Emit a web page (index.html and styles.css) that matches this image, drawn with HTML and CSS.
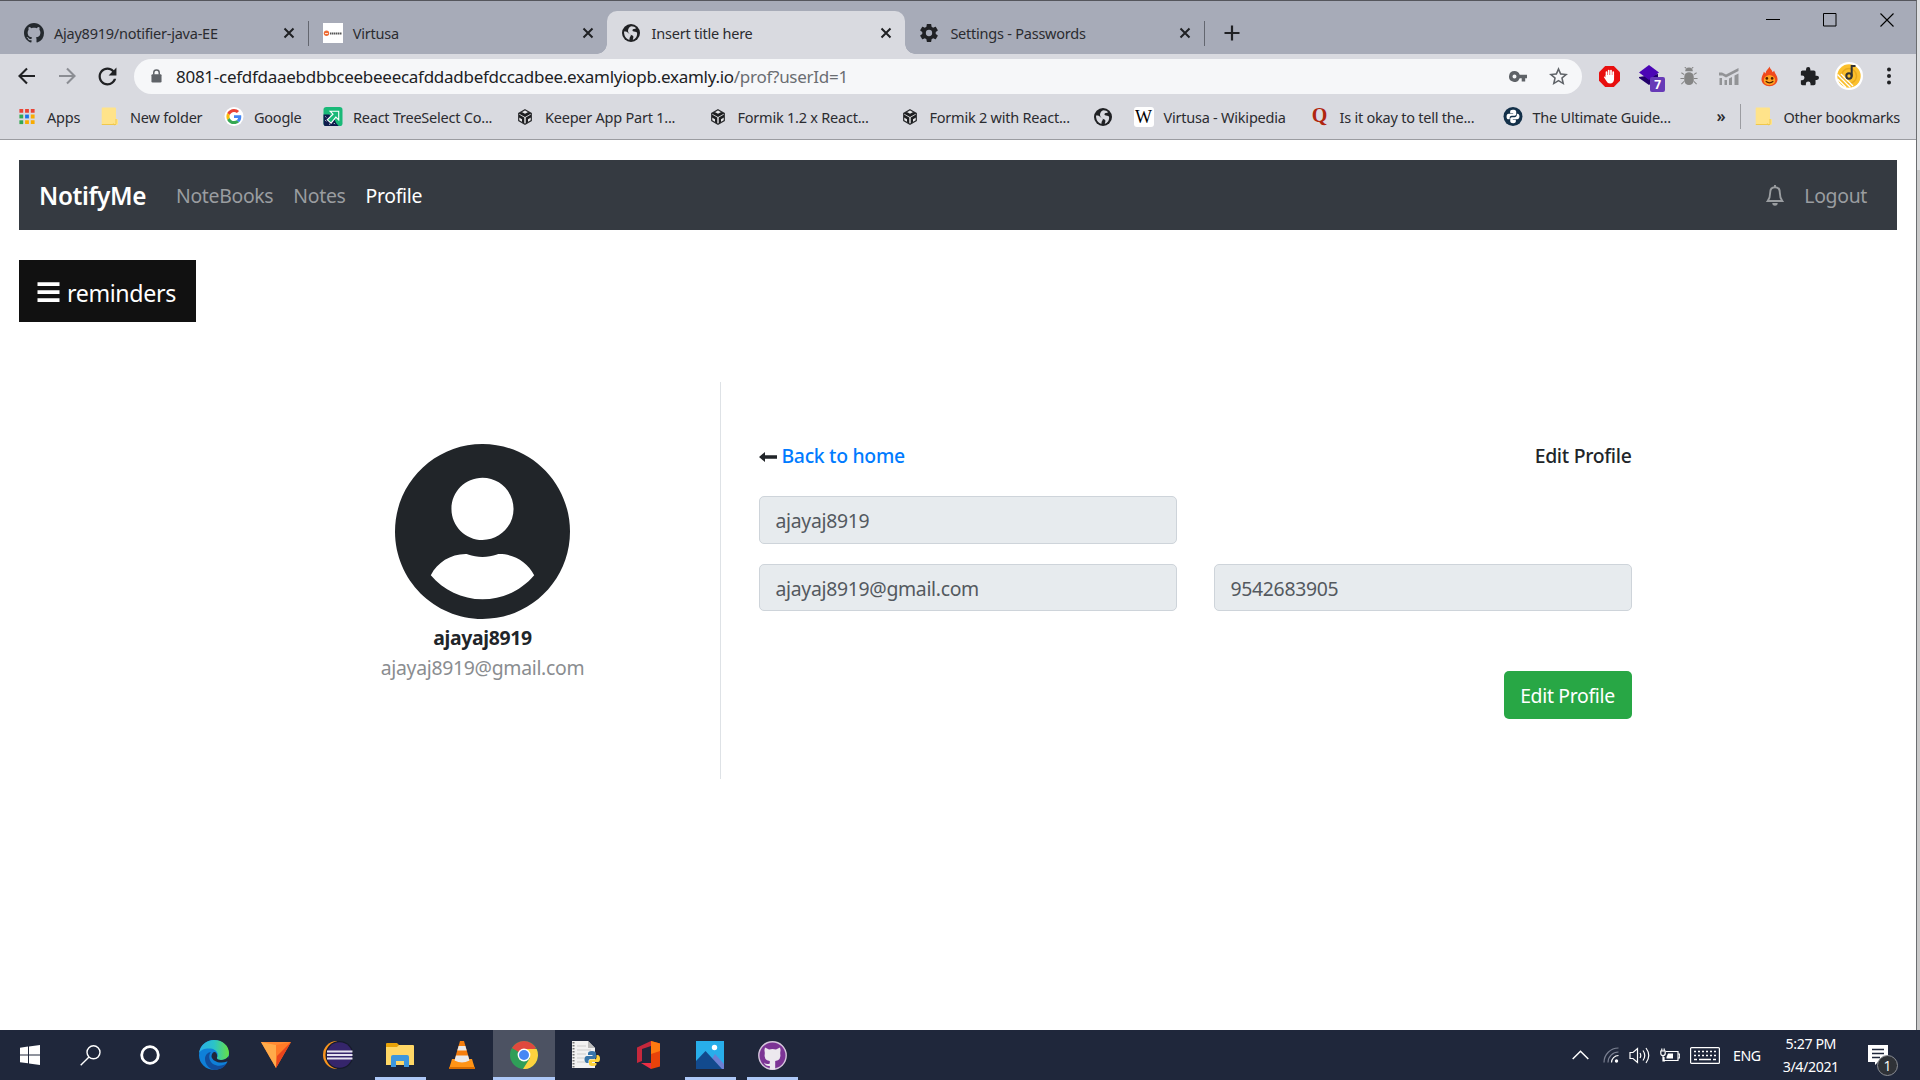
FILE: index.html
```html
<!DOCTYPE html>
<html lang="en">
<head>
<meta charset="utf-8">
<title>Insert title here</title>
<link rel="stylesheet" href="styles.css">
</head>
<body>
<svg class="defs" width="0" height="0">
  <defs>
    <symbol id="octocat" viewBox="0 0 16 16"><path d="M8 0C3.58 0 0 3.58 0 8c0 3.54 2.29 6.53 5.47 7.59.4.07.55-.17.55-.38 0-.19-.01-.82-.01-1.49-2.01.37-2.53-.49-2.69-.94-.09-.23-.48-.94-.82-1.13-.28-.15-.68-.52-.01-.53.63-.01 1.08.58 1.23.82.72 1.21 1.87.87 2.33.66.07-.52.28-.87.51-1.07-1.78-.2-3.64-.89-3.64-3.95 0-.87.31-1.59.82-2.15-.08-.2-.36-1.02.08-2.12 0 0 .67-.21 2.2.82.64-.18 1.32-.27 2-.27s1.36.09 2 .27c1.53-1.04 2.2-.82 2.2-.82.44 1.1.16 1.92.08 2.12.51.56.82 1.27.82 2.15 0 3.07-1.87 3.75-3.65 3.95.29.25.54.73.54 1.48 0 1.07-.01 1.93-.01 2.2 0 .21.15.46.55.38A8.01 8.01 0 0 0 16 8c0-4.42-3.58-8-8-8z"/></symbol>
    <symbol id="globe" viewBox="0 0 18 18"><circle cx="9" cy="9" r="9" fill="#202124"/><path d="M2 7.500c2-.3 3.600.3 4.300 1.600.5 1.100 2.300.6 2.500 2 .2 1.500-1.300 1.600-1.300 4.700C4 15 2 12 2 7.500zM9.500 2.200c2 0 3.700.8 4.700 2-.6.500-1.800.5-2.700.9-1.200.5-1.300 1.700-.5 2.200 1 .6 3.300.2 3.900 1.300.5 1 .2 3.400-.9 4.900-.9 1.200-2 2-3.200 2.300.3-1.500 1-2.700.3-3.700-.7-.9-1.900-.8-2.900-1.800-1-1-2.200-1.700-2.200-3.600C6 4.500 7.500 2.500 9.500 2.200z" fill="#d9dae0"/></symbol>
    <symbol id="close" viewBox="0 0 12 12"><path d="M1.500 1.500l9 9M10.500 1.500l-9 9" stroke="#202124" stroke-width="2" fill="none"/></symbol>
    <symbol id="folder" viewBox="0 0 17 19"><path d="M1 .5h12.500a1 1 0 0 1 1 1V12h1a1 1 0 0 1 1 1v3.500a1.500 1.500 0 0 1-1.500 1.500H1a.8.8 0 0 1-.8-.8V1.300A.8.800 0 0 1 1 .5z" fill="#ffe38a"/><path d="M.3 17.500h14.200M14.500 12v4.500a1.300 1.300 0 0 1-2.600 0" stroke="#f0c84c" fill="none"/></symbol>
    <symbol id="sandbox" viewBox="0 0 16 16"><path d="M8 .8l6.300 3.600v7.200L8 15.200l-6.300-3.600V4.400z" fill="#e8e8ea" stroke="#2a2b2e" stroke-width="1.200"/><path d="M1.700 4.600L4.800 3 8 4.700 11.200 3l3.100 1.600L8 8zM7.300 8.500v6.200L5 13.300v-3L2 8.500V5.600zM8.700 8.500v6.200l2.300-1.400v-3l3-1.800V5.600z" fill="#1e1f22"/></symbol>
  </defs>
</svg>

<div class="screen">
  <div class="window">
    <header class="browser">
      <div class="tabstrip">
        <div class="tab">
          <svg class="fav" viewBox="0 0 16 16" fill="#24292e"><use href="#octocat"/></svg>
          <span>Ajay8919/notifier-java-EE</span>
          <svg class="x"><use href="#close"/></svg>
        </div>
        <div class="tab sep">
          <svg class="fav" viewBox="0 0 20 20"><path fill="#fff" d="M0 0h20v20H0z"/><circle cx="3.500" cy="10.300" r="2.700" fill="#ee6c35"/><path d="M2 10.500h3" stroke="#fff" stroke-width=".8"/><path d="M7 10.500h12" stroke="#555" stroke-width="1.800" stroke-dasharray="1.500 .5"/></svg>
          <span>Virtusa</span>
          <svg class="x"><use href="#close"/></svg>
        </div>
        <div class="tab active">
          <svg class="fav small"><use href="#globe"/></svg>
          <span>Insert title here</span>
          <svg class="x"><use href="#close"/></svg>
        </div>
        <div class="tab">
          <svg class="fav small" viewBox="2 2 20 20" fill="#202124"><path d="M19.430 12.980c.04-.32.07-.64.07-.98s-.03-.66-.07-.98l2.110-1.650c.19-.15.24-.42.12-.64l-2-3.460c-.12-.22-.39-.3-.61-.22l-2.490 1c-.52-.4-1.080-.73-1.690-.98l-.38-2.650C14.460 2.180 14.250 2 14 2h-4c-.25 0-.46.18-.49.42l-.38 2.650c-.61.25-1.170.59-1.690.98l-2.490-1c-.23-.09-.49 0-.61.22l-2 3.460c-.13.22-.07.49.12.64l2.110 1.650c-.04.32-.07.65-.07.98s.03.66.07.98l-2.110 1.650c-.19.15-.24.42-.12.64l2 3.460c.12.22.39.3.61.22l2.490-1c.52.4 1.080.73 1.690.98l.38 2.650c.03.24.24.42.49.42h4c.25 0 .46-.18.49-.42l.38-2.650c.61-.25 1.170-.59 1.690-.98l2.490 1c.23.09.49 0 .61-.22l2-3.460c.12-.22.07-.49-.12-.64l-2.110-1.650zM12 15.500a3.500 3.500 0 1 1 0-7 3.500 3.500 0 0 1 0 7z"/></svg>
          <span>Settings - Passwords</span>
          <svg class="x"><use href="#close"/></svg>
        </div>
        <div class="newtab sep"><svg width="16" height="16" viewBox="0 0 16 16"><path d="M8 .5v15M.5 8h15" stroke="#202124" stroke-width="2.200"/></svg></div>
        <div class="wincontrols">
          <svg width="14" height="14"><path d="M0 6.500h14" stroke="#000"/></svg>
          <svg width="14" height="14"><path d="M.5.500h12.500v12.500H.5z" fill="none" stroke="#000"/></svg>
          <svg width="14" height="14"><path d="M.5.500l13 13M13.500.500l-13 13" stroke="#000" stroke-width="1.100"/></svg>
        </div>
      </div>

      <div class="toolbar">
        <div class="navbtns">
          <svg width="18" height="18" viewBox="0 0 18 18" fill="none" stroke="#202124" stroke-width="2.100"><path d="M17 9H2M9 1.500L1.500 9 9 16.500"/></svg>
          <svg width="18" height="18" viewBox="0 0 18 18" fill="none" stroke="#8b8d93" stroke-width="2.100"><path d="M1 9h15M9 1.500L16.500 9 9 16.500"/></svg>
          <svg width="19" height="19" viewBox="3.500 3.500 17 17" fill="#202124"><path d="M17.650 6.350C16.200 4.900 14.210 4 12 4c-4.420 0-7.990 3.580-7.990 8s3.570 8 7.990 8c3.730 0 6.840-2.550 7.730-6h-2.080c-.82 2.330-3.040 4-5.650 4-3.310 0-6-2.690-6-6s2.690-6 6-6c1.660 0 3.140.69 4.220 1.780L13 11h7V4l-2.350 2.350z"/></svg>
        </div>
        <div class="omnibox">
          <svg width="11" height="14" viewBox="0 0 12 15"><path d="M3 6V4a3 3 0 0 1 6 0v2" fill="none" stroke="#5f6368" stroke-width="1.600"/><rect x=".5" y="5.500" width="11" height="9" rx="1.300" fill="#5f6368"/></svg>
          <p class="url">8081-cefdfdaaebdbbceebeeecafddadbefdccadbee.examlyiopb.examly.io<span>/prof?userId=1</span></p>
          <svg class="key" width="18" height="11" viewBox="0 0 18 11"><path d="M5.500 0a5.500 5.500 0 1 0 5.200 7.300h2v3.200h3.500V7.300H18V3.700h-7.300A5.500 5.500 0 0 0 5.500 0zm0 3.500a2 2 0 1 1 0 4 2 2 0 0 1 0-4z" fill="#5f6368"/></svg>
          <svg width="19" height="19" viewBox="2 2 20 20"><path d="M22 9.240l-7.190-.62L12 2 9.190 8.630 2 9.240l5.460 4.730L5.820 21 12 17.270 18.180 21l-1.630-7.030L22 9.240zM12 15.400l-3.760 2.270 1-4.280-3.320-2.880 4.380-.38L12 6.100l1.710 4.040 4.380.38-3.320 2.880 1 4.280L12 15.400z" fill="#5f6368"/></svg>
        </div>
        <div class="extensions">
          <span><svg width="21" height="21" viewBox="0 0 21 21"><path d="M6.200 0h8.600L21 6.200v8.600L14.800 21H6.200L0 14.800V6.200z" fill="#e80f0f"/><path d="M7.500 11V6.200M9.700 10V4.500M12 10V4.500M14.200 10.500V6" stroke="#fff" stroke-width="1.700" stroke-linecap="round"/><path d="M6.650 9h8.400v4.500q-.5 4-4 4-2.500 0-3.700-2.500L4.800 11q.4-1.200 1.850.5z" fill="#fff"/></svg></span>
          <span class="badged"><svg width="22" height="22" viewBox="0 0 22 22"><path d="M1 13l10 7 9-7V9L1 12z" fill="#22006b"/><path d="M11 0l10 7.500L11 15 1 7.500z" fill="#4b05b5"/></svg><b>7</b></span>
          <span><svg width="18" height="19" viewBox="0 0 18 20" fill="#858585"><path d="M5 4.500a4 4 0 0 1 8 0z"/><rect x="4" y="5.500" width="10" height="13.500" rx="5"/><path d="M4 8L1 6M4 12H0M4 15l-3 3M14 8l3-2M14 12h4M14 15l3 3M6 1.500L4.500 0M12 1.500L13.500 0" stroke="#858585" stroke-width="1.100"/></svg></span>
          <span><svg width="20" height="17" viewBox="0 0 20 17" fill="#929396"><path d="M0 4.500h3L7 6.500 19.500 0v3L7 9.500 3.500 7.500H0zM.5 10H3v7H.5zM5.500 12H8v5H5.500zM10 10.500L13 9v8h-3zM15.500 7.500L19.500 5.500V17h-4z"/></svg></span>
          <span><svg width="17" height="21" viewBox="0 0 18 21"><path d="M9 0c.5 3 3 3.500 3.200 6L14 4.500c.5 3 3.500 5 3.500 9 0 4.500-3.800 7.300-8.500 7.300S.5 18 .5 13.500c0-3.500 2-5 2.500-8L5 7.200C5 4 8 3 9 0z" fill="#f0491b"/><path d="M9 9c3 .5 6 2 6 5.500s-2.500 5-6 5-6-1.500-6-5S6 9.500 9 9z" fill="#ffa21f"/><circle cx="6.200" cy="12.500" r="1.400" fill="#522000"/><circle cx="11.800" cy="12.500" r="1.400" fill="#522000"/><path d="M5 15.500q4 3.500 8 0" fill="none" stroke="#522000" stroke-width="1.300"/></svg></span>
          <span><svg width="19" height="19" viewBox="1 1 22 22"><path d="M20.500 11H19V7c0-1.100-.9-2-2-2h-4V3.500a2.500 2.500 0 0 0-5 0V5H4c-1.100 0-1.990.9-1.990 2v3.800H3.500a2.700 2.700 0 0 1 0 5.400H2V20c0 1.100.9 2 2 2h3.800v-1.500a2.700 2.700 0 0 1 5.400 0V22H17c1.100 0 2-.9 2-2v-4h1.500a2.500 2.500 0 0 0 0-5z" fill="#202124"/></svg></span>
          <span><svg width="28" height="28" viewBox="0 0 28 28"><circle cx="14" cy="14" r="14" fill="#fff"/><circle cx="14" cy="14" r="11.700" fill="#fbc02d"/><circle cx="14" cy="14" r="7.500" fill="none" stroke="#e9a91d" stroke-width="1.500"/><path d="M2.500 12.500l13 13M2.500 17l8.500 8.500M6 12l12 12" stroke="#fff" stroke-width="1.400"/><circle cx="14" cy="14" r="2.700" fill="none" stroke="#333" stroke-width="2"/><path d="M16.700 14.500V4H20.500" stroke="#333" stroke-width="2" fill="none"/></svg></span>
          <span><svg width="4" height="18" viewBox="0 0 4 18" fill="#202124"><circle cx="2" cy="2.500" r="2"/><circle cx="2" cy="9" r="2"/><circle cx="2" cy="15.500" r="2"/></svg></span>
        </div>
      </div>

      <nav class="bookmarks">
        <a><svg viewBox="0 0 20 20"><path d="M2 2h4v4H2zM8 2h4v4H8zM14 2h4v4h-4z" fill="#ea4335"/><path d="M2 8h4v4H2z" fill="#34a853"/><path d="M8 8h4v4H8z" fill="#1a73e8"/><path d="M14 8h4v4h-4zM8 14h4v4H8zM14 14h4v4h-4z" fill="#f9ab00"/><path d="M2 14h4v4H2z" fill="#34a853"/></svg>Apps</a>
        <a><svg><use href="#folder"/></svg>New folder</a>
        <a><svg viewBox="-6 -6 60 60"><circle cx="24" cy="24" r="30" fill="#fff"/><path fill="#EA4335" d="M24 9.500c3.540 0 6.710 1.220 9.210 3.600l6.850-6.850C35.900 2.380 30.470 0 24 0 14.620 0 6.510 5.380 2.560 13.220l7.980 6.190C12.430 13.720 17.740 9.500 24 9.500z"/><path fill="#4285F4" d="M46.980 24.550c0-1.570-.15-3.090-.38-4.550H24v9.020h12.940c-.58 2.960-2.260 5.480-4.780 7.180l7.730 6c4.510-4.180 7.090-10.360 7.090-17.650z"/><path fill="#FBBC05" d="M10.530 28.590c-.48-1.450-.76-2.990-.76-4.590s.27-3.140.76-4.590l-7.980-6.190C.92 16.460 0 20.120 0 24c0 3.880.92 7.540 2.560 10.780l7.970-6.190z"/><path fill="#34A853" d="M24 48c6.480 0 11.930-2.130 15.890-5.810l-7.730-6c-2.150 1.450-4.920 2.300-8.160 2.300-6.260 0-11.570-4.220-13.470-9.910l-7.980 6.190C6.510 42.620 14.620 48 24 48z"/></svg>Google</a>
        <a><svg viewBox="0 0 20 20"><rect width="20" height="20" rx="3" fill="#19b978"/><path d="M0 8v9a3 3 0 0 0 3 3h13a10 10 0 0 1-4-6L6 8z" fill="#0d1b4c"/><path d="M7 4.500h9v9l-3-2.800L8 17l-4-3.500L10 7.500z" fill="#19b978" stroke="#fff" stroke-width="1.200"/><path d="M2 10l1 1M2 14l1 1M6 18l1 .5M11 17l1 1" stroke="#fff"/></svg>React TreeSelect Co...</a>
        <a><svg class="s16"><use href="#sandbox"/></svg>Keeper App Part 1...</a>
        <a><svg class="s16"><use href="#sandbox"/></svg>Formik 1.2 x React...</a>
        <a><svg class="s16"><use href="#sandbox"/></svg>Formik 2 with React...</a>
        <a><svg class="s18"><use href="#globe"/></svg></a>
        <a><i class="wiki">W</i>Virtusa - Wikipedia</a>
        <a><i class="quora">Q</i>Is it okay to tell the...</a>
        <a><svg viewBox="0 0 20 20"><circle cx="10" cy="10" r="10" fill="#133049"/><path d="M9.800 3C7.500 3 7 4 7 5v1.500h3.200v.7H5.500C4 7.200 3.200 8.500 3.200 10.200S4 13 5.300 13h1.200v-1.700c0-1.300 1-2.200 2.200-2.200h3c1 0 1.700-.8 1.700-1.700V5c0-1.300-1.400-2-3.600-2z" fill="#fff"/><path d="M10.200 17c2.300 0 2.800-1 2.800-2v-1.500H9.800v-.7h4.700c1.500 0 2.300-1.300 2.300-3S16 7 14.700 7h-.7v1.500c0 1.300-1 2.200-2.200 2.200h-3c-1 0-1.700.8-1.700 1.700V15c0 1.300 1.100 2 3.100 2z" fill="#fff"/></svg>The Ultimate Guide...</a>
        <a class="more">»</a>
        <a class="other"><svg><use href="#folder"/></svg>Other bookmarks</a>
      </nav>
    </header>

    <main class="page">
      <nav class="navbar">
        <a class="brand">NotifyMe</a>
        <a>NoteBooks</a><a>Notes</a><a class="on">Profile</a>
        <span class="right">
          <svg width="18" height="21" viewBox="0 0 18 21"><path d="M9 2.200c-3.300 0-4.800 2.500-4.800 5.300 0 4.500-1 6.500-2.500 8.500h14.600c-1.500-2-2.500-4-2.500-8.500 0-2.800-1.500-5.300-4.800-5.300zM9 0v2.500" fill="none" stroke="#9a9da0" stroke-width="1.900"/><path d="M6.300 18h5.400a2.700 2.700 0 0 1-5.400 0z" fill="#9a9da0"/></svg>
          <a>Logout</a>
        </span>
      </nav>
      <button class="reminders"><svg width="23" height="21" viewBox="0 0 23 21"><path d="M.5 2.200h22M.5 10.200h22M.5 18.200h22" stroke="#fff" stroke-width="3.800"/></svg>reminders</button>

      <section class="card">
        <div class="who">
          <svg width="175" height="175" viewBox="0 0 496 496"><path fill="#212529" d="M248 0C111 0 0 111 0 248s111 248 248 248 248-111 248-248S385 0 248 0zm0 96c48.600 0 88 39.400 88 88s-39.400 88-88 88-88-39.400-88-88 39.400-88 88-88zm0 344c-58.700 0-111.300-26.600-146.500-68.200 18.800-35.400 55.600-59.800 98.500-59.800 2.400 0 4.800.4 7.100 1.100 13 4.200 26.600 6.900 40.900 6.900s28-2.700 40.900-6.900c2.300-.7 4.700-1.100 7.100-1.100 42.900 0 79.700 24.400 98.500 59.800C359.300 413.400 306.700 440 248 440z"/></svg>
          <b>ajayaj8919</b>
          <span>ajayaj8919@gmail.com</span>
        </div>
        <div class="form">
          <div class="formhead">
            <h6><svg width="18" height="10" viewBox="0 0 18 10"><path d="M6 0v3.300h12v3.400H6V10L0 5z" fill="#212529"/></svg><a>Back to home</a></h6>
            <h6>Edit Profile</h6>
          </div>
          <div class="fields">
            <div class="input">ajayaj8919</div><div></div>
            <div class="input">ajayaj8919@gmail.com</div>
            <div class="input">9542683905</div>
          </div>
          <button class="save">Edit Profile</button>
        </div>
      </section>
    </main>
  </div>
  <div class="behind"></div>

  <footer class="taskbar">
    <div class="sys">
      <span><svg width="20" height="20" viewBox="0 0 20 20" fill="#fff"><path d="M0 2.700L8 1.600v7.900H0zM9 1.400L20 0v9.500H9zM0 10.400h8v7.900L0 17.200zM9 10.400h11V20L9 18.500z"/></svg></span>
      <span><svg width="21" height="21" viewBox="0 0 21 21" fill="none" stroke="#fff" stroke-width="1.400"><circle cx="13.500" cy="7.300" r="6.500"/><path d="M9 12L.7 20.300"/></svg></span>
      <span><svg width="20" height="20" viewBox="0 0 20 20"><circle cx="10" cy="10" r="8.300" fill="none" stroke="#fff" stroke-width="2.800"/></svg></span>
    </div>
    <div class="apps">
      <span><svg width="30" height="30" viewBox="0 0 30 30"><defs><linearGradient id="e1"><stop offset="0" stop-color="#2aaee8"/><stop offset=".5" stop-color="#2bc3c9"/><stop offset="1" stop-color="#66e044"/></linearGradient></defs><circle cx="15" cy="15" r="15" fill="#0f80d8"/><path d="M0 13C1 5 8 0 15 0c9 0 15 6 15 13 0 5-4 7-8 7-3 0-4.500-1-4-2.500 2-3 0-8-6-9C7 8 2 9 0 13z" fill="url(#e1)"/><path d="M12 12c-3 3-2 9 2 12 5 3 10 2 14-1-3 5-8 7-13 7-5-1-9-6-9-11 0-4 3-7 6-7z" fill="#114d9c"/><path d="M18 17.500c-.5 1.500 1 2.500 4 2.500 3 0 6-1.200 7.500-4l1 6-2.500-.5c-7 3-15-.5-15.500-5 0-3 2-5 3.500-4.500 2 1 2.500 4 2 5.500z" fill="#20263a"/></svg></span>
      <span><svg width="30" height="26" viewBox="0 0 30 26"><path d="M0 0h30L15 26z" fill="#ff7b26"/><path d="M0 0h30L15 3z" fill="#ff8a33"/><path d="M0 0l15 3v23z" fill="#ffab4a"/><path d="M30 0L15 26l1-12z" fill="#e9441c"/></svg></span>
      <span><svg width="30" height="28" viewBox="0 0 30 28"><path d="M14 0a14 14 0 1 0 0 28z" fill="#f7941e"/><circle cx="16.500" cy="14" r="14" fill="#161b2c"/><circle cx="16.500" cy="14" r="12.800" fill="#35256b"/><path d="M4 10.500h25.500M4 14h25.500M4 17.500h25.500" stroke="#e6e4f0" stroke-width="2.200"/></svg></span>
      <span class="open"><svg width="28" height="24" viewBox="0 0 28 24"><path d="M0 1q0-1 1-1h10l3 3-2 4H0z" fill="#e8a208"/><path d="M0 4h11l2-2h14q1 0 1 1v19H0z" fill="#ffd766"/><path d="M5 24V14q0-2 2-2h14q2 0 2 2v10h-5v-6h-8v6z" fill="#3d97dd"/></svg></span>
      <span><svg width="26" height="28" viewBox="0 0 26 28"><path d="M3 18h20l3 10H0z" fill="#ff9416"/><path d="M0 26h26v2H0z" fill="#d96d00"/><path d="M11 0h4l5.500 19q-7.500 5-15 0z" fill="#f57d0b"/><path d="M9.600 5h6.800l1.300 4.500H8.300zM7 14.500h12l1.500 5q-7.500 4-15 0z" fill="#e9e9ea"/></svg></span>
      <span class="open current"><svg width="28" height="28" viewBox="0 0 28 28"><circle cx="14" cy="14" r="14" fill="#2f9e58"/><path d="M14 14L1.900 7A14 14 0 0 1 26.100 7z" fill="#e0493e"/><path d="M14 8h12.600A14 14 0 0 1 13 28l7-11z" fill="#fdd23e"/><circle cx="14" cy="14" r="6.400" fill="#fff"/><circle cx="14" cy="14" r="5" fill="#4687f4"/></svg></span>
      <span><svg width="28" height="28" viewBox="0 0 28 28"><path d="M0 0h16l7 7v20H0z" fill="#f2f2f2"/><path d="M16 0v7h7z" fill="#bbb"/><path d="M1.500 1v26" stroke="#777" stroke-width="2" stroke-dasharray="1.500 1.500"/><path d="M5 5h9M5 9h14M5 13h9M5 17h8M5 21h9" stroke="#ccc"/><path d="M20 10c-3 0-4 1-4 2.500V14h4.500v1H15c-2 0-2.500 2-2.500 3.500S13.500 22 15 22h1.500v-2c0-1.300 1-2 2-2h3.500c1.200 0 2-.8 2-2v-3.500C24 11 23 10 20 10z" fill="#3775a9"/><path d="M21 25c3 0 3.500-1 3.500-2v-1H20v-1h6c1.500 0 2-1.500 2-3.500S27 14 25.500 14H24.500v2.500c0 1.300-1 2-2 2H19c-1.200 0-2 .8-2 2V23c0 1.500 1.500 2 4 2z" fill="#ffd43b"/></svg></span>
      <span><svg width="23" height="28" viewBox="0 0 23 28"><path d="M0 6.500L14 0v5L5 8v12L0 22z" fill="#c5283c"/><path d="M14 0l9 2.500v23L14 28z" fill="#e8430a"/><path d="M14 0l9 2.500V10l-9 3z" fill="#ff7a10"/><path d="M4 22h10v6z" fill="#ec2e45"/></svg></span>
      <span class="open"><svg width="28" height="28" viewBox="0 0 28 28"><path d="M0 0h28v28H0z" fill="#28aeea"/><path d="M10 28l9-15 9 10v5z" fill="#6d80d3"/><path d="M0 20L9.500 10 26 28H0z" fill="#124a8d"/><circle cx="18.500" cy="6.500" r="2.700" fill="#fff"/></svg></span>
      <span class="open"><svg width="29" height="29" viewBox="0 0 29 29"><circle cx="14.500" cy="14.500" r="13.700" fill="#7c3495" stroke="#d5c6dc" stroke-width="1.400"/><path d="M7 6.500l4 2q3.500-.8 7 0l4-2q1.200 3 .2 5.500 1.500 7-5 8v8.500h-5.400V25q-4 .7-6-3.500 3 2.500 6 1v-2.500q-6.500-1-5-8-1-2.500.2-5.500z" fill="#ece8ee"/></svg></span>
    </div>
    <div class="tray">
      <svg width="17" height="10" viewBox="0 0 17 10"><path d="M.7 9L8.500 1.200 16.300 9" fill="none" stroke="#fff" stroke-width="1.500"/></svg>
      <svg width="16" height="16" viewBox="0 0 16 16" fill="none"><path d="M1 15.500A14.500 14.500 0 0 1 15.500 1M5 15.500A10.500 10.500 0 0 1 15.500 5" stroke="#7b8192" stroke-width="1.200"/><path d="M8.500 15.500a7 7 0 0 1 7-7" stroke="#fff" stroke-width="1.200"/><circle cx="13.500" cy="14" r="1.700" fill="#fff"/></svg>
      <svg width="21" height="17" viewBox="0 0 21 17" fill="none" stroke="#fff" stroke-width="1.200"><path d="M1 5.500h3L8.500 1.500v14L4 11.500H1zM11 6q1.500 2.500 0 5M14 3.500q3.500 5 0 10M17 1q5.500 7.500 0 15"/></svg>
      <svg width="20" height="15" viewBox="0 0 20 15" fill="none" stroke="#fff" stroke-width="1.200"><path d="M6 3.500h12v9H4V9M18.500 6h1.200v4h-1.200M3 7.500V13h2M.8 3h4.400v2.500q0 2-2.200 2t-2.200-2zM1.800 3V.5M4.200 3V.5"/><path d="M8 5.500h5v5H6.500V9z" fill="#fff" stroke="none"/></svg>
      <svg width="30" height="17" viewBox="0 0 30 17" fill="none" stroke="#fff" stroke-width="1.200"><rect x=".6" y=".6" width="28.800" height="15.800" rx="1"/><path d="M4 4.500h22M4 8.500h22" stroke-width="1.500" stroke-dasharray="2 2"/><path d="M4 12.500h3M9 12.500h12M23 12.500h3" stroke-width="1.500"/></svg>
      <span class="lang">ENG</span>
      <div class="clock"><span>5:27 PM</span><span>3/4/2021</span></div>
      <div class="note"><svg width="20" height="20" viewBox="0 0 20 20"><path d="M0 0h20v17H10l-3 3v-3H0z" fill="#fff"/><path d="M4 4.500h12M4 8.500h12M4 12.500h8" stroke="#1f273b" stroke-width="1.300"/></svg><b>1</b></div>
    </div>
  </footer>
</div>
</body>
</html>
```
FILE: styles.css
```css
* { box-sizing: border-box; letter-spacing: -0.016em; }
body {
  margin: 0;
  overflow: hidden;
  font-family: "Noto Sans", "Open Sans", sans-serif;
  color: #212529;
}
.defs { position: absolute; }
svg { display: block; flex: none; }
p, h6 { margin: 0; }
button { font: inherit; border: 0; }

.screen {
  width: 1920px;
  height: 1080px;
  display: grid;
  grid-template: 1030px 50px / 1917px 3px;
}
.window {
  border-top: 1px solid #55565c;
  border-right: 1px solid #6b6d70;
  background: #fff;
}
.behind { background: linear-gradient(#dfe0e2 170px, #c9c9c9 170px); }

/* Browser frame */
.browser {
  height: 139px;
  background: #d9dae0;
  border-bottom: 1px solid #9b9ca1;
  font-size: 14.5px;
  color: #2b2c30;
}
.tabstrip {
  height: 53px;
  display: flex;
  align-items: flex-end;
  padding-left: 9px;
  background: #a7abb8;
}
.tab {
  position: relative;
  width: 298.800px;
  height: 43px;
  display: flex;
  align-items: center;
  padding: 0 13px 0 15px;
}
.tab span { flex: 1; padding-left: 10px; }
.fav { width: 20px; height: 20px; }
.fav.small { width: 18px; height: 18px; margin-right: 2px; }
.x { width: 12px; height: 12px; }
.sep::before {
  content: "";
  position: absolute;
  left: 0;
  top: 10px;
  width: 1px;
  height: 25px;
  background: #63666f;
}
.tab.active { background: #d9dae0; border-radius: 10px 10px 0 0; }
.tab.active::before, .tab.active::after {
  content: "";
  position: absolute;
  bottom: 0;
  width: 10px;
  height: 10px;
}
.tab.active::before { left: -10px; background: radial-gradient(circle at 0 0, transparent 9.5px, #d9dae0 10px); }
.tab.active::after { right: -10px; background: radial-gradient(circle at 100% 0, transparent 9.5px, #d9dae0 10px); }
.newtab {
  position: relative;
  width: 60px;
  height: 43px;
  display: flex;
  align-items: center;
  padding-left: 20px;
}
.wincontrols {
  margin-left: auto;
  align-self: flex-start;
  display: flex;
  gap: 43px;
  padding: 12px 22px 0 0;
}

.toolbar {
  height: 44px;
  display: flex;
  align-items: center;
  padding-left: 18px;
}
.navbtns { width: 116px; display: flex; align-items: center; gap: 22px; }
.omnibox {
  width: 1448px;
  height: 35px;
  display: flex;
  align-items: center;
  padding: 0 14px 0 17px;
  border-radius: 18px;
  background: #f6f7f9;
}
.url { flex: 1; padding-left: 14px; font-size: 17px; color: #202124; }
.url span { color: #6a6d72; }
.key { margin-right: 22px; }
.extensions {
  width: 320px;
  margin-left: 7px;
  display: grid;
  grid-template-columns: repeat(8, 1fr);
  place-items: center;
}
.badged { position: relative; }
.badged b {
  position: absolute;
  left: 12px;
  top: 12px;
  width: 15px;
  height: 15px;
  border-radius: 2px;
  background: #673ab7;
  color: #fff;
  font: bold 12px/15px "Open Sans", sans-serif;
  text-align: center;
}

.bookmarks {
  height: 37px;
  display: grid;
  grid-template-columns: 83px 124px 99px 192px 192.500px 192px 194px 40px 176px 193px 214px 23px auto;
  align-items: center;
  padding-left: 17px;
  white-space: nowrap;
}
.bookmarks a { display: flex; align-items: center; gap: 10px; }
.bookmarks svg { width: 20px; height: 19px; }
.bookmarks .s16 { width: 16px; height: 16px; margin: 0 2px; }
.bookmarks .s18 { width: 18px; height: 18px; }
.bookmarks i {
  width: 20px;
  height: 20px;
  font: 18px/20px "Liberation Serif", serif;
  text-align: center;
  letter-spacing: 0;
}
.wiki { background: #fff; border-radius: 3px; color: #000; }
.bookmarks .quora { color: #b0260f; font-weight: bold; font-size: 20px; line-height: 17px; }
.more { font-size: 16px; font-weight: 600; padding-bottom: 2px; }
.other { border-left: 1px solid #9b9ca1; height: 25px; padding-left: 13px; }

/* Application page */
.page { padding: 20px 19px 0; font-size: 19.400px; }
.navbar {
  height: 70px;
  display: flex;
  align-items: center;
  gap: 20px;
  padding: 1px 30px 0 20px;
  background: #353a41;
  color: #9a9da0;
}
.navbar .brand { font-size: 24.300px; font-weight: 600; color: #fff; margin-right: 10px; }
.navbar .on { color: #fff; }
.right { margin-left: auto; display: flex; align-items: center; gap: 20px; }
.reminders {
  width: 177px;
  height: 62px;
  margin: 30px 0 60px;
  padding: 3px 0 0 18px;
  display: flex;
  align-items: center;
  gap: 7px;
  background: #111;
  color: #fff;
  font-size: 23.200px;
  letter-spacing: -0.016em;
}
.card {
  width: 1425px;
  height: 397px;
  margin: 0 auto;
  display: grid;
  grid-template-columns: 475px 950px;
}
.who {
  display: flex;
  flex-direction: column;
  align-items: center;
  padding: 62px 0 0;
  border-right: 1px solid #dee2e6;
  line-height: 30px;
}
.who b { margin-top: 4px; font-weight: 700; }
.who span { color: #8a8d90; }
.form { padding: 62px 39px 0 38px; display: flex; flex-direction: column; }
.formhead { display: flex; justify-content: space-between; height: 23px; margin-bottom: 29px; }
.formhead h6 {
  display: flex;
  align-items: center;
  gap: 5px;
  font-size: 19.400px;
  font-weight: 500;
  line-height: 23px;
}
.formhead a { color: #007bff; }
.formhead svg { margin-top: 2px; }
.fields { display: grid; grid-template-columns: 1fr 1fr; gap: 20px 37px; }
.input {
  height: 47.500px;
  padding: 2px 15px 0 16px;
  border: 1px solid #ced4da;
  border-radius: 5px;
  background: #e7ebee;
  color: #54595f;
  line-height: 44px;
}
.save {
  align-self: flex-end;
  width: 128px;
  height: 48px;
  margin-top: 60px;
  padding: 1px 0 0;
  border-radius: 5px;
  background: #28a745;
  color: #fff;
}

/* Taskbar */
.taskbar {
  grid-column: 1 / -1;
  display: flex;
  background: #1f273b;
  color: #fff;
}
.sys, .apps { display: flex; }
.sys span, .apps span { display: flex; align-items: center; justify-content: center; height: 50px; }
.sys span { width: 60px; }
.apps { padding-left: 3px; }
.apps span { width: 62px; position: relative; }
.apps .current { background: #4c5262; }
.open::after {
  content: "";
  position: absolute;
  bottom: 0;
  left: 6px;
  right: 5px;
  height: 3px;
  background: #adc8f7;
}
.open.current::after { left: 0; right: 0; }
.tray {
  margin-left: auto;
  width: 348px;
  display: flex;
  align-items: center;
  font-size: 14.200px;
}
.tray span { letter-spacing: -0.4px; }
.tray > svg { margin-right: 10px; }
.tray > svg:first-child { margin-right: 14px; }
.lang { margin: 0 20px 0 3px; }
.clock { display: flex; flex-direction: column; align-items: center; width: 60px; line-height: 23px; }
.note { position: relative; margin-left: 27px; }
.note b {
  position: absolute;
  left: 9px;
  top: 10px;
  width: 21px;
  height: 21px;
  border: 1px solid #8b8e94;
  border-radius: 50%;
  background: #2f3237;
  font: 14px/19px "Open Sans", sans-serif;
  text-align: center;
}
```
